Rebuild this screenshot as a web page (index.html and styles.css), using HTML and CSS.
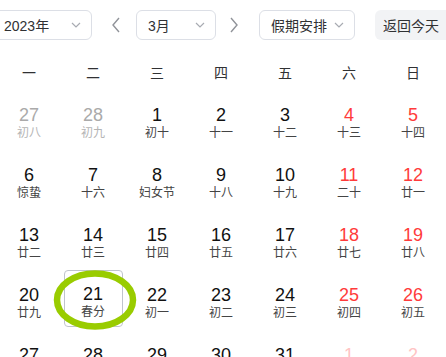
FILE: index.html
```html
<!DOCTYPE html>
<html lang="zh-CN">

<head>
    <meta charset="UTF-8">
    <meta name="viewport" content="width=device-width, initial-scale=1.0">
    <title>万年历</title>
    <link rel="stylesheet" href="styles.css">
</head>

<body>
    <div class="top-bar">
        <div class="select year-select">
            <span>2023年</span>
            <svg class="caret" width="10" height="6" viewBox="0 0 10 6"><path d="M1 1l4 4 4-4" fill="none" stroke="#a8abb2" stroke-width="1.2"/></svg>
        </div>
        <button class="nav-btn prev">
            <svg width="10" height="16" viewBox="0 0 10 16"><path d="M8 1L2 8l6 7" fill="none" stroke="#909399" stroke-width="1.4"/></svg>
        </button>
        <div class="select month-select">
            <span>3月</span>
            <svg class="caret" width="10" height="6" viewBox="0 0 10 6"><path d="M1 1l4 4 4-4" fill="none" stroke="#a8abb2" stroke-width="1.2"/></svg>
        </div>
        <button class="nav-btn next">
            <svg width="10" height="16" viewBox="0 0 10 16"><path d="M2 1l6 7-6 7" fill="none" stroke="#909399" stroke-width="1.4"/></svg>
        </button>
        <div class="select holiday-select">
            <span>假期安排</span>
            <svg class="caret" width="10" height="6" viewBox="0 0 10 6"><path d="M1 1l4 4 4-4" fill="none" stroke="#a8abb2" stroke-width="1.2"/></svg>
        </div>
        <button class="today-btn">返回今天</button>
    </div>

    <div class="calendar">
        <div class="week-head">
            <div>一</div><div>二</div><div>三</div><div>四</div><div>五</div><div>六</div><div>日</div>
        </div>

        <div class="days">
            <!-- week 1 -->
            <div class="cell other"><div class="day"><div class="num">27</div><div class="lunar">初八</div></div></div>
            <div class="cell other"><div class="day"><div class="num">28</div><div class="lunar">初九</div></div></div>
            <div class="cell"><div class="day"><div class="num">1</div><div class="lunar">初十</div></div></div>
            <div class="cell"><div class="day"><div class="num">2</div><div class="lunar">十一</div></div></div>
            <div class="cell"><div class="day"><div class="num">3</div><div class="lunar">十二</div></div></div>
            <div class="cell weekend"><div class="day"><div class="num">4</div><div class="lunar">十三</div></div></div>
            <div class="cell weekend"><div class="day"><div class="num">5</div><div class="lunar">十四</div></div></div>
            <!-- week 2 -->
            <div class="cell"><div class="day"><div class="num">6</div><div class="lunar">惊蛰</div></div></div>
            <div class="cell"><div class="day"><div class="num">7</div><div class="lunar">十六</div></div></div>
            <div class="cell"><div class="day"><div class="num">8</div><div class="lunar">妇女节</div></div></div>
            <div class="cell"><div class="day"><div class="num">9</div><div class="lunar">十八</div></div></div>
            <div class="cell"><div class="day"><div class="num">10</div><div class="lunar">十九</div></div></div>
            <div class="cell weekend"><div class="day"><div class="num">11</div><div class="lunar">二十</div></div></div>
            <div class="cell weekend"><div class="day"><div class="num">12</div><div class="lunar">廿一</div></div></div>
            <!-- week 3 -->
            <div class="cell"><div class="day"><div class="num">13</div><div class="lunar">廿二</div></div></div>
            <div class="cell"><div class="day"><div class="num">14</div><div class="lunar">廿三</div></div></div>
            <div class="cell"><div class="day"><div class="num">15</div><div class="lunar">廿四</div></div></div>
            <div class="cell"><div class="day"><div class="num">16</div><div class="lunar">廿五</div></div></div>
            <div class="cell"><div class="day"><div class="num">17</div><div class="lunar">廿六</div></div></div>
            <div class="cell weekend"><div class="day"><div class="num">18</div><div class="lunar">廿七</div></div></div>
            <div class="cell weekend"><div class="day"><div class="num">19</div><div class="lunar">廿八</div></div></div>
            <!-- week 4 -->
            <div class="cell"><div class="day"><div class="num">20</div><div class="lunar">廿九</div></div></div>
            <div class="cell selected">
                <div class="day"><div class="num">21</div><div class="lunar">春分</div></div>
                <svg class="mark" width="90" height="66" viewBox="0 0 90 66"><ellipse cx="45" cy="33" rx="38" ry="26.5" fill="none" stroke="#9c0" stroke-width="6.5"/></svg>
            </div>
            <div class="cell"><div class="day"><div class="num">22</div><div class="lunar">初一</div></div></div>
            <div class="cell"><div class="day"><div class="num">23</div><div class="lunar">初二</div></div></div>
            <div class="cell"><div class="day"><div class="num">24</div><div class="lunar">初三</div></div></div>
            <div class="cell weekend"><div class="day"><div class="num">25</div><div class="lunar">初四</div></div></div>
            <div class="cell weekend"><div class="day"><div class="num">26</div><div class="lunar">初五</div></div></div>
            <!-- week 5 -->
            <div class="cell"><div class="day"><div class="num">27</div><div class="lunar">初六</div></div></div>
            <div class="cell"><div class="day"><div class="num">28</div><div class="lunar">初七</div></div></div>
            <div class="cell"><div class="day"><div class="num">29</div><div class="lunar">初八</div></div></div>
            <div class="cell"><div class="day"><div class="num">30</div><div class="lunar">初九</div></div></div>
            <div class="cell"><div class="day"><div class="num">31</div><div class="lunar">初十</div></div></div>
            <div class="cell next-month"><div class="day"><div class="num">1</div><div class="lunar">十一</div></div></div>
            <div class="cell next-month"><div class="day"><div class="num">2</div><div class="lunar">十二</div></div></div>
        </div>
    </div>
</body>

</html>
```

FILE: styles.css
```css
body {
    margin: 0;
    padding: 0;
    background-color: #ffffff;
    color: #303133;
    font-family: "Liberation Sans", "Noto Sans CJK SC", sans-serif;
    overflow: hidden;
}

.top-bar {
    display: flex;
    align-items: center;
    padding-top: 10px;
    height: 30px;
}

.top-bar > * {
    flex-shrink: 0;
}

.select {
    display: flex;
    align-items: center;
    justify-content: space-between;
    box-sizing: border-box;
    height: 30px;
    padding: 0 10px 0 11px;
    border: 1px solid #dcdfe6;
    border-radius: 6px;
    font-size: 14px;
    color: #303133;
}

.year-select {
    margin-left: -8px;
    width: 100px;
}

.month-select {
    margin-left: 10px;
    width: 80px;
}

.holiday-select {
    margin-left: 15px;
    width: 96px;
}

.caret {
    display: block;
}

.nav-btn {
    width: 20px;
    height: 30px;
    padding: 0;
    border: none;
    background: none;
    display: flex;
    align-items: center;
    justify-content: center;
}

.prev {
    margin-left: 14px;
}

.next {
    margin-left: 8px;
}

.today-btn {
    margin-left: 20px;
    width: 80px;
    height: 30px;
    padding: 0 8px;
    border: none;
    border-radius: 6px;
    background-color: #f2f3f5;
    color: #303133;
    font-size: 14px;
    font-family: inherit;
    text-align: left;
}

.calendar {
    margin-left: -3px;
    width: 448px;
    margin-top: 16px;
}

.week-head {
    display: grid;
    grid-template-columns: repeat(7, 64px);
    height: 34px;
    line-height: 34px;
    font-size: 14px;
    text-align: center;
    color: #303133;
}

.days {
    display: grid;
    grid-template-columns: repeat(7, 64px);
    grid-auto-rows: 60px;
}

.cell {
    position: relative;
    text-align: center;
}

.day {
    box-sizing: border-box;
    width: 59px;
    height: 57px;
    margin: 0 auto;
    padding-top: 14px;
    border: 1.5px solid transparent;
    border-radius: 4px;
}

.num {
    font-size: 18px;
    line-height: 20px;
    color: #111111;
}

.lunar {
    font-size: 12px;
    line-height: 16px;
    color: #444444;
}

.weekend .num {
    color: #ff3b3b;
}

.other .num {
    color: #aaaaaa;
}

.other .lunar {
    color: #b5b5b5;
}

.next-month .num {
    color: #ffc4c4;
}

.next-month .lunar {
    color: #d0d0d0;
}

.selected .day {
    border-color: #c0c4cc;
    padding-top: 12.5px;
}

.mark {
    position: absolute;
    left: -11px;
    top: -3px;
    pointer-events: none;
}
```
